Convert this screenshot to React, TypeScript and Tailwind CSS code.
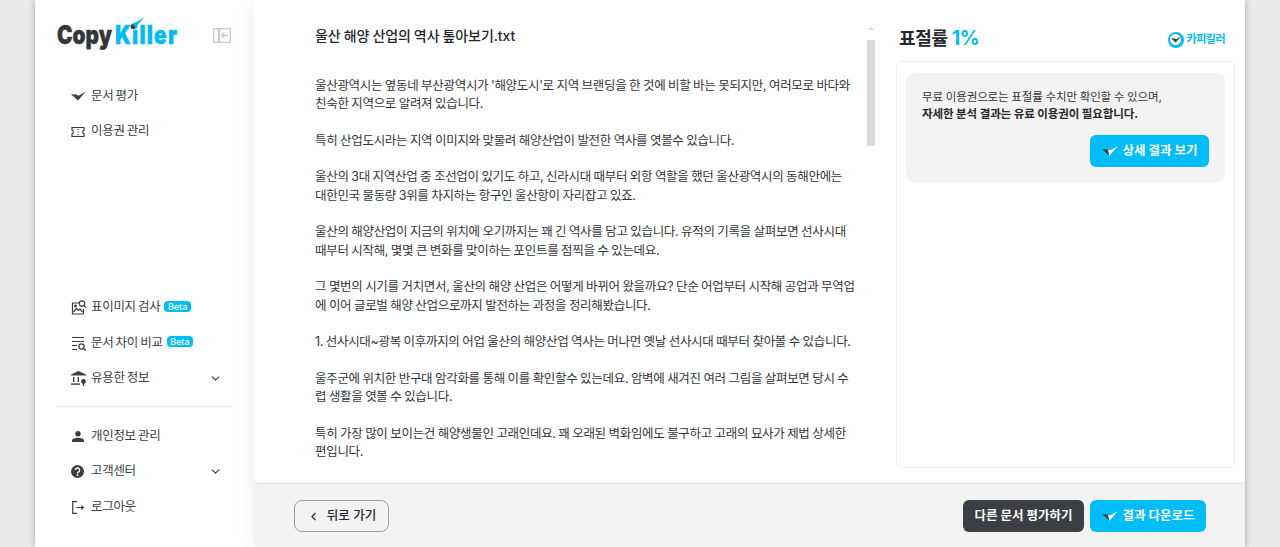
import { ChevronDown, ChevronLeft } from "lucide-react"

const font = "font-['Inter','Noto_Sans_CJK_KR',sans-serif]"

// Two-tone check used for the brand mark and the buttons
function CheckMark({ dark = "#3b3e42", light = "#3b3e42", className = "" }: { dark?: string; light?: string; className?: string }) {
  return (
    <svg viewBox="0 0 16 10" className={className}>
      <path d="M5.2 3.4 L8.2 4.6 L16 0 L7.2 10 Z" fill={light} />
      <path d="M0 3 L6 3.4 L7.2 9.6 Z" fill={dark} />
    </svg>
  )
}

function Ticket() {
  return (
    <svg viewBox="0 0 14 12" className="w-[14px] h-[12px]" fill="none" stroke="#3b3e42" strokeWidth="1.2">
      <path d="M1 1.5h12v2.6a2 2 0 0 0 0 3.8v2.6H1V7.9a2 2 0 0 0 0-3.8z" />
      <path d="M7 3v1M7 5.6v1M7 8.2v1" />
    </svg>
  )
}

function ImageSearch() {
  return (
    <svg viewBox="0 0 16 15" className="w-4 h-[15px]" fill="none" stroke="#3b3e42" strokeWidth="1.2">
      <path d="M8 3H1.5v11h11V9" />
      <circle cx="11" cy="3.6" r="2.7" />
      <path d="M13 5.6l2 2" />
      <path d="M2.5 12l3-3.5 2 2 1.5-1.5 2.5 3" />
      <circle cx="4.5" cy="6" r="0.8" />
    </svg>
  )
}

function ListSearch() {
  return (
    <svg viewBox="0 0 16 15" className="w-4 h-[15px]" fill="none" stroke="#3b3e42" strokeWidth="1.2">
      <path d="M1 1.5h12M1 5.5h12M1 9.5h5M1 13.5h5" />
      <circle cx="10.5" cy="10.5" r="2.6" />
      <path d="M12.5 12.5l2.3 2" />
    </svg>
  )
}

function Bank() {
  return (
    <svg viewBox="0 0 16 15" className="w-4 h-[15px]" fill="#3b3e42">
      <path d="M7.5 0 L15 3.6 V4.6 H0 V3.6 Z" />
      <path d="M2 6h1.4v5H2zM6.6 6H8v5H6.6z" />
      <path d="M0 12.4h9v1.4H0z" />
      <circle cx="12.5" cy="10.5" r="2.4" />
      <path d="M11.8 12h1.4v3h-1.4z" />
    </svg>
  )
}

function Person() {
  return (
    <svg viewBox="0 0 12 11" className="w-[12px] h-[11px] ml-[1px]" fill="#3b3e42">
      <circle cx="6" cy="2.7" r="2.7" />
      <path d="M0 11V9.6C0 7.6 3.2 6.7 6 6.7s6 .9 6 2.9V11z" />
    </svg>
  )
}

function Help() {
  return (
    <svg viewBox="0 0 13 13" className="w-[13px] h-[13px]">
      <circle cx="6.5" cy="6.5" r="6.5" fill="#3b3e42" />
      <path d="M4.4 5.1a2.1 2.1 0 1 1 3.3 1.7c-.8.5-1.2.9-1.2 1.6" fill="none" stroke="#ffffff" strokeWidth="1.4" />
      <circle cx="6.5" cy="10.2" r="0.85" fill="#ffffff" />
    </svg>
  )
}

function Logout() {
  return (
    <svg viewBox="0 0 12 13" className="w-[12px] h-[13px] ml-[1px]" fill="none" stroke="#3b3e42" strokeWidth="1.2">
      <path d="M5 .7H.7v11.6H5" />
      <path d="M4.5 6.5h7M9.3 4.6l2 1.9-2 1.9" />
    </svg>
  )
}

function PanelCollapse() {
  return (
    <svg viewBox="0 0 18 15" className="w-[18px] h-[15px]" fill="none" stroke="#c9cbce" strokeWidth="1.4">
      <rect x="0.7" y="0.7" width="16.6" height="13.6" />
      <path d="M6 1v13" strokeWidth="2" />
      <path d="M15 7.5H9M11.5 4.5l-3 3 3 3" />
    </svg>
  )
}

function Logo() {
  return (
    <div className="flex items-center font-['Inter',sans-serif] font-black text-[26px] leading-none scale-x-[0.8] origin-left w-[130px] whitespace-nowrap [-webkit-text-stroke:0.4px]">
      <span className="text-[#33363a]">Copy</span>
      <span className="relative ml-[4px] text-[#00bcf2] tracking-[1.5px]">
        Killer
        <span className="absolute left-[19px] top-[2px] w-[6px] h-[5px] rounded-full bg-[#33363a]" />
        <svg viewBox="0 0 14 10" className="absolute left-[19px] top-[-5px] w-[19px] h-[11px]">
          <path d="M0 6 L4 9.5 L14 0 L5 4.5 Z" fill="#00bcf2" />
        </svg>
      </span>
    </div>
  )
}

function Beta() {
  return (
    <span className="ml-[4px] -mt-[3px] px-[3.5px] h-[11px] rounded-[4px] bg-[#00bcf2] text-white text-[9px] leading-[11px] font-['Inter',sans-serif] font-medium">
      Beta
    </span>
  )
}

function NavItem({ icon, label, beta, chevron }: { icon: React.ReactNode; label: string; beta?: boolean; chevron?: boolean }) {
  return (
    <div className="flex items-center h-[35.5px] pl-[14px] pr-[10px]">
      <span className="w-[20px] flex justify-start items-center shrink-0">{icon}</span>
      <span className="text-[12.5px] text-[#3b3e42] tracking-[-0.3px] [word-spacing:-1px]">{label}</span>
      {beta && <Beta />}
      {chevron && <ChevronDown className="ml-auto w-[13px] h-[13px] text-[#3b3e42]" strokeWidth={2} />}
    </div>
  )
}

const paragraphs = [
  ["울산광역시는 옆동네 부산광역시가 '해양도시'로 지역 브랜딩을 한 것에 비할 바는 못되지만, 여러모로 바다와", "친숙한 지역으로 알려져 있습니다."],
  ["특히 산업도시라는 지역 이미지와 맞물려 해양산업이 발전한 역사를 엿볼수 있습니다."],
  ["울산의 3대 지역산업 중 조선업이 있기도 하고, 신라시대 때부터 외항 역할을 했던 울산광역시의 동해안에는", "대한민국 물동량 3위를 차지하는 항구인 울산항이 자리잡고 있죠."],
  ["울산의 해양산업이 지금의 위치에 오기까지는 꽤 긴 역사를 담고 있습니다. 유적의 기록을 살펴보면 선사시대", "때부터 시작해, 몇몇 큰 변화를 맞이하는 포인트를 점찍을 수 있는데요."],
  ["그 몇번의 시기를 거치면서, 울산의 해양 산업은 어떻게 바뀌어 왔을까요? 단순 어업부터 시작해 공업과 무역업", "에 이어 글로벌 해양 산업으로까지 발전하는 과정을 정리해봤습니다."],
  ["1. 선사시대~광복 이후까지의 어업 울산의 해양산업 역사는 머나먼 옛날 선사시대 때부터 찾아볼 수 있습니다."],
  ["울주군에 위치한 반구대 암각화를 통해 이를 확인할수 있는데요. 암벽에 새겨진 여러 그림을 살펴보면 당시 수", "렵 생활을 엿볼 수 있습니다."],
  ["특히 가장 많이 보이는건 해양생물인 고래인데요. 꽤 오래된 벽화임에도 불구하고 고래의 묘사가 제법 상세한", "편입니다."],
]

export default function App() {
  return (
    <div className={`${font} h-[547px] w-[1280px] overflow-hidden bg-[#e8e9eb] flex justify-center`}>
      <div className="w-[1210px] flex bg-white shadow-[0_0_6px_rgba(0,0,0,0.3)]">
        {/* Sidebar */}
        <aside className="w-[220px] shrink-0 flex flex-col pl-[22px] pr-[23px] pt-[22px] bg-white">
          <div className="flex items-center justify-between h-[26px]">
            <Logo />
            <span className="mr-[1px]"><PanelCollapse /></span>
          </div>
          <nav className="mt-[30.5px]">
            <NavItem icon={<CheckMark className="w-[15px] h-[10px]" />} label="문서 평가" />
            <NavItem icon={<Ticket />} label="이용권 관리" />
          </nav>
          <nav className="mt-[140.5px]">
            <NavItem icon={<ImageSearch />} label="표이미지 검사" beta />
            <NavItem icon={<ListSearch />} label="문서 차이 비교" beta />
            <NavItem icon={<Bank />} label="유용한 정보" chevron />
          </nav>
          <div className="h-px bg-[#ececee] mt-[9px] mb-[12px]" />
          <nav>
            <NavItem icon={<Person />} label="개인정보 관리" />
            <NavItem icon={<Help />} label="고객센터" chevron />
            <NavItem icon={<Logout />} label="로그아웃" />
          </nav>
        </aside>

        {/* Main */}
        <main className="flex-1 flex flex-col min-w-0 shadow-[-8px_0_14px_rgba(0,0,0,0.04)]">
          <div className="flex-1 flex min-h-0 overflow-hidden">
            {/* Document */}
            <section className="w-[621px] shrink-0 flex pl-[60px] pt-[26px] overflow-hidden">
              <div className="w-[549px] shrink-0">
                <h1 className="text-[14px] leading-[20px] font-medium text-[#26282b] tracking-[-0.1px] [word-spacing:-0.5px]">울산 해양 산업의 역사 톺아보기.txt</h1>
                <div className="mt-[30.6px] flex flex-col gap-[18.4px] text-[12.5px] leading-[18.3px] text-[#33363a] tracking-[-0.31px] [word-spacing:-0.5px]">
                  {paragraphs.map((lines, i) => (
                    <p key={i}>
                      {lines.map((line) => (
                        <span key={line} className="block whitespace-nowrap">{line}</span>
                      ))}
                    </p>
                  ))}
                </div>
              </div>
              <div className="ml-[3px] w-[8px] shrink-0 pt-[25px] -mt-[26px] relative">
                <div className="absolute top-[27px] left-[1px] w-0 h-0 border-x-[3px] border-x-transparent border-b-[3px] border-b-[#d5d5d5]" />
                <div className="mt-[15px] h-[106px] bg-[#d9d9d9]" />
              </div>
            </section>

            {/* Result panel */}
            <section className="flex-1 pl-[20px] pr-[10px] pt-[24px] pb-[15px] flex flex-col min-w-0">
              <div className="flex items-center justify-between h-[30px] pl-[3px] pr-[10px]">
                <div className="text-[18px] font-bold text-[#26282b] tracking-[-0.3px]">
                  표절률 <span className="text-[19.5px] text-[#00bcf2]">1%</span>
                </div>
                <div className="mt-[1px] flex items-center gap-[3px] text-[11px] font-bold text-[#00bcf2] tracking-[-0.5px]">
                  <span className="w-4 h-4 rounded-full bg-[#00bcf2] flex items-center justify-center">
                    <span className="w-[11px] h-[11px] rounded-full bg-white flex items-center justify-center">
                      <CheckMark className="w-[10px] h-[7px]" />
                    </span>
                  </span>
                  카피킬러
                </div>
              </div>
              <div className="mt-[7px] flex-1 border border-[#f0f0f1] rounded-[6px] pt-[11px] px-[9px]">
                <div className="bg-[#f3f3f4] rounded-[8px] px-[16px] pt-[16px] pb-[15px]">
                  <p className="text-[11.5px] leading-[17px] text-[#33363a] tracking-[-0.1px] [word-spacing:-0.4px]">무료 이용권으로는 표절률 수치만 확인할 수 있으며,</p>
                  <p className="text-[11.5px] leading-[17px] font-bold text-[#26282b] tracking-[-0.1px]">자세한 분석 결과는 유료 이용권이 필요합니다.</p>
                  <div className="flex justify-end mt-[12px]">
                    <button className="h-[32px] w-[119px] rounded-[6px] bg-[#00bcf7] text-white text-[12.5px] font-bold flex items-center justify-center gap-[5px]">
                      <CheckMark className="w-[16px] h-[10px]" light="#ffffff" />
                      상세 결과 보기
                    </button>
                  </div>
                </div>
              </div>
            </section>
          </div>

          {/* Footer */}
          <footer className="h-[64px] shrink-0 bg-[#f3f3f4] border-t border-[#e4e4e5] shadow-[0_-1px_3px_rgba(0,0,0,0.05)] flex items-center justify-between pl-[39px] pr-[39px]">
            <button className="h-[32px] w-[95px] pt-px rounded-[8px] border border-[#9b9da0] bg-[#f3f3f4] text-[12.5px] font-medium text-[#26282b] flex items-center justify-center gap-[7px]">
              <ChevronLeft className="w-[13px] h-[13px]" strokeWidth={2.2} />
              뒤로 가기
            </button>
            <div className="flex gap-[6px]">
              <button className="h-[32px] w-[121px] pt-px rounded-[6px] bg-[#3b3e42] text-white text-[12.5px] font-bold">다른 문서 평가하기</button>
              <button className="h-[32px] w-[116px] pt-px rounded-[6px] bg-[#00bcf7] text-white text-[12.5px] font-bold flex items-center justify-center gap-[5px]">
                <CheckMark className="w-[16px] h-[10px]" light="#ffffff" />
                결과 다운로드
              </button>
            </div>
          </footer>
        </main>
      </div>
    </div>
  )
}
